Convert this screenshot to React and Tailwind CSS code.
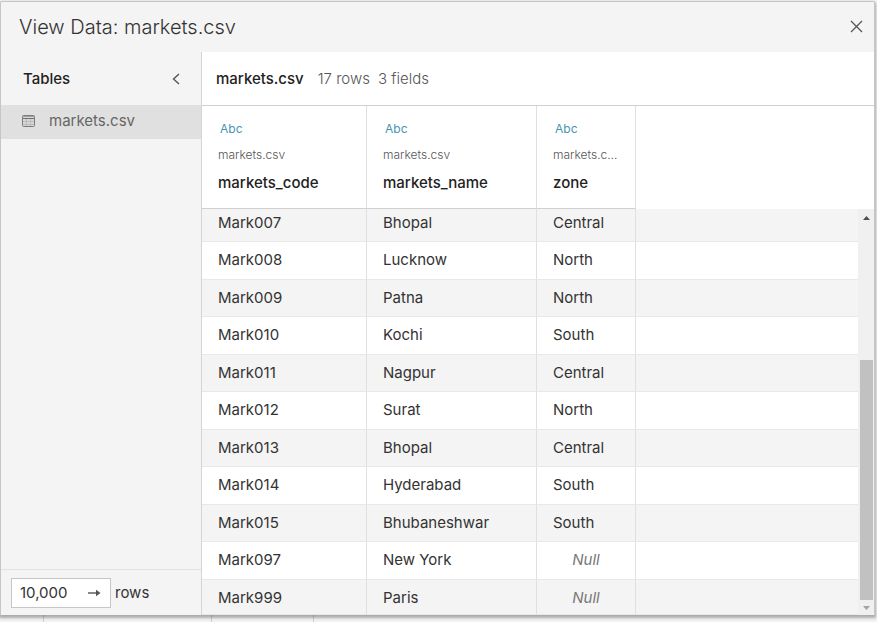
import React from "react";

const columns = ["markets_code", "markets_name", "zone"];

const rows = [
  ["Mark007", "Bhopal", "Central"],
  ["Mark008", "Lucknow", "North"],
  ["Mark009", "Patna", "North"],
  ["Mark010", "Kochi", "South"],
  ["Mark011", "Nagpur", "Central"],
  ["Mark012", "Surat", "North"],
  ["Mark013", "Bhopal", "Central"],
  ["Mark014", "Hyderabad", "South"],
  ["Mark015", "Bhubaneshwar", "South"],
  ["Mark097", "New York", null],
  ["Mark999", "Paris", null],
];

function rowHeight(index) {
  if (index === 0) return "h-[33px] pt-1";
  if (index === rows.length - 1) return "h-[35px] pt-2";
  return index % 2 ? "h-[38px] pt-2" : "h-[37px] pt-2";
}

function TitleBar() {
  return (
    <header className="flex h-[50px] items-center justify-between bg-[#f4f4f4] pl-[18px] pr-[11px]">
      <h1 className="text-[20px] font-light leading-6 text-[#333]">View Data: markets.csv</h1>
      <button type="button" aria-label="Close" className="flex h-[14px] w-[13px] items-start justify-center">
        <svg width="13" height="13" viewBox="0 0 13 13" fill="none" stroke="#555" strokeWidth="1.3">
          <path d="M1 1 12 12M12 1 1 12" />
        </svg>
      </button>
    </header>
  );
}

function TableIcon() {
  return (
    <svg width="13" height="12" viewBox="0 0 13 12" fill="none">
      <rect x="0.5" y="0.5" width="12" height="11" rx="1" fill="#d8d8d4" stroke="#7c7c7c" />
      <path d="M1 1.5h11" stroke="#a0a0a0" />
      <path d="M1 3.5h11" stroke="#707070" />
      <path d="M4.5 4v7M8.5 4v7M1 6.5h11M1 9.5h11" stroke="#bcbcbc" />
    </svg>
  );
}

function Sidebar() {
  return (
    <aside className="flex w-[201px] shrink-0 flex-col border-r border-[#d4d4d4] bg-[#f4f4f4]">
      <div className="flex h-[53px] items-center justify-between pl-[22px] pr-[21px]">
        <h2 className="text-[15px] font-medium leading-5 text-[#222]">Tables</h2>
        <button type="button" aria-label="Collapse tables" className="flex h-3 w-2 items-center justify-center">
          <svg width="8" height="12" viewBox="0 0 8 12" fill="none" stroke="#555" strokeWidth="1.4">
            <path d="M7 1 1.5 6 7 11" />
          </svg>
        </button>
      </div>
      <a
        href="#markets"
        className="flex h-[34px] items-center gap-[14px] bg-[#e0e0e0] pb-0.5 pl-[21px] text-[15px] leading-5 text-[#666]"
      >
        <TableIcon />
        markets.csv
      </a>
      <form
        className="mt-auto flex h-[46px] items-center gap-1 border-t border-[#e2e2e2] pl-[10px] text-[15px] leading-5 text-[#333]"
        onSubmit={(event) => event.preventDefault()}
      >
        <div className="flex h-[30px] w-[100px] items-center border border-[#c6c6c6] bg-white pl-2 pr-[9px]">
          <input
            id="row-count"
            type="text"
            defaultValue="10,000"
            className="w-full min-w-0 bg-transparent leading-5 outline-none"
          />
          <button type="submit" aria-label="Apply row count" className="flex items-center">
            <svg width="13" height="8" viewBox="0 0 13 8">
              <path d="M0 4h9" stroke="#555" strokeWidth="1.4" />
              <path d="M8 0.8 12.5 4 8 7.2Z" fill="#555" />
            </svg>
          </button>
        </div>
        <label htmlFor="row-count">rows</label>
      </form>
    </aside>
  );
}

function DataTable() {
  return (
    <table className="w-full table-fixed border-separate border-spacing-0 text-left text-[15px] leading-5 text-[#333]">
      <colgroup>
        <col className="w-[165px]" />
        <col className="w-[170px]" />
        <col className="w-[99px]" />
        <col />
      </colgroup>
      <thead>
        <tr>
          {columns.map((name) => (
            <th
              key={name}
              scope="col"
              className="h-[103px] border-b border-r border-b-[#d0d0d0] border-r-[#e0e0e0] px-4 pt-[15px] align-top font-normal"
            >
              <div className="pl-0.5 text-[12px] leading-4 text-[#4795b3]">Abc</div>
              <div className="mt-2 truncate text-[12px] font-light leading-5 text-[#555]">markets.csv</div>
              <div className="mt-2 font-medium text-[#222]">{name}</div>
            </th>
          ))}
          <td />
        </tr>
      </thead>
      <tbody>
        {rows.map((row, index) => (
          <tr key={row[0]} className="odd:bg-[#f4f4f4]">
            {row.map((value, column) => (
              <td
                key={column}
                className={`${rowHeight(index)} border-b border-r border-b-[#e8e8e8] border-r-[#e0e0e0] px-4 pb-0 align-top ${
                  value === null ? "text-center italic text-[#777]" : ""
                }`}
              >
                {value === null ? "Null" : value}
              </td>
            ))}
            <td className="border-b border-[#e8e8e8]" />
          </tr>
        ))}
      </tbody>
    </table>
  );
}

function Scrollbar() {
  return (
    <div className="mt-[103px] flex w-4 shrink-0 flex-col items-center bg-[#f0f0f0]">
      <svg className="mt-[7px]" width="7" height="4" viewBox="0 0 7 4" fill="#505050">
        <path d="M3.5 0 7 4H0Z" />
      </svg>
      <div className="mt-auto h-[240px] w-[13px] bg-[#c1c1c1]" />
      <svg className="mb-[5px] mt-[6px]" width="7" height="4" viewBox="0 0 7 4" fill="#a3a3a3">
        <path d="M3.5 4 7 0H0Z" />
      </svg>
    </div>
  );
}

export default function App() {
  return (
    <div className="flex min-h-screen flex-col bg-[#f3f3f3] pr-0.5 pt-px font-['Inter','Liberation_Sans',sans-serif]">
      <main className="relative rounded-t-xs border border-b-0 border-[#c6c6c6] bg-white shadow-[0_2px_3px_1px_rgba(0,0,0,0.3)]">
        <TitleBar />
        <div className="flex">
          <Sidebar />
          <section className="flex min-w-0 flex-1 flex-col">
            <div className="flex h-[54px] items-center border-b border-[#d0d0d0] pl-[14px] text-[15px] leading-5 text-[#555]">
              <h2 className="font-medium text-[#222]">markets.csv</h2>
              <span className="ml-[14px] font-light">17 rows</span>
              <span className="ml-2 font-light">3 fields</span>
            </div>
            <div className="flex">
              <DataTable />
              <Scrollbar />
            </div>
          </section>
        </div>
      </main>
      <div className="flex flex-1">
        <div className="w-11 border-r border-[#d0d0d0]" />
        <div className="w-[168px] border-r border-[#d0d0d0]" />
        <div className="w-[102px] border-r border-[#d0d0d0]" />
      </div>
    </div>
  );
}
